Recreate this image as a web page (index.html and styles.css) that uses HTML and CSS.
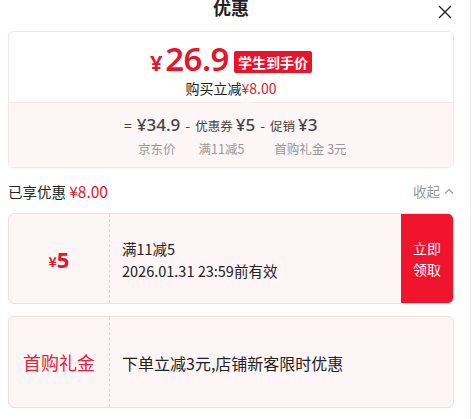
FILE: index.html
```html
<!DOCTYPE html>
<html lang="zh-CN">
<head>
    <meta charset="UTF-8">
    <title>优惠</title>
    <link rel="stylesheet" href="styles.css">
</head>
<body>
    <div class="panel">
        <div class="header">
            <span class="title">优惠</span>
            <span class="close">
                <svg width="14" height="14" viewBox="0 0 14 14"><path d="M1 1 L13 13 M13 1 L1 13" stroke="#222" stroke-width="1.4" fill="none"/></svg>
            </span>
        </div>

        <div class="summary">
            <div class="summary-top">
                <div class="price-row">
                    <span class="price"><span class="yen">¥</span>26.9</span>
                    <span class="tag">学生到手价</span>
                </div>
                <div class="save">购买立减<span class="red">¥8.00</span></div>
            </div>
            <div class="summary-bottom">
                <div class="formula">
                    <span class="op">=</span>
                    <span class="num">¥34.9</span>
                    <span class="op">-</span>
                    <span class="lbl">优惠券</span>
                    <span class="num">¥5</span>
                    <span class="op">-</span>
                    <span class="lbl">促销</span>
                    <span class="num">¥3</span>
                </div>
                <div class="notes">
                    <span class="n1">京东价</span>
                    <span class="n2">满11减5</span>
                    <span class="n3">首购礼金 3元</span>
                </div>
            </div>
        </div>

        <div class="enjoyed">
            <span>已享优惠 <span class="red">¥8.00</span></span>
            <span class="fold">收起
                <svg width="10" height="6" viewBox="0 0 10 6"><path d="M1 5.5 L5 1.5 L9 5.5" stroke="#999" stroke-width="1.1" fill="none"/></svg>
            </span>
        </div>

        <div class="coupon">
            <div class="coupon-left"><span class="small-yen">¥</span><span class="amount">5</span></div>
            <div class="coupon-mid">
                <div>满11减5</div>
                <div>2026.01.31 23:59前有效</div>
            </div>
            <div class="coupon-btn">立即<br>领取</div>
        </div>

        <div class="coupon tall">
            <div class="coupon-left gift">首购礼金</div>
            <div class="coupon-mid big">下单立减3元,店铺新客限时优惠</div>
        </div>
    </div>
</body>
</html>
```

FILE: styles.css
```css
body {
    margin: 0;
    font-family: "Noto Sans CJK SC", "Noto Sans", sans-serif;
    color: #222;
    background: #fff;
}
.panel {
    width: 446px;
    height: 419px;
    padding: 0 16px 0 8px;
    border-right: 1px solid #ececec;
    overflow: hidden;
}
.header {
    height: 38px;
    margin-top: -7px;
    display: flex;
    align-items: flex-start;
    justify-content: center;
    position: relative;
}
.title {
    font-size: 18px;
    font-weight: bold;
    line-height: 28px;
}
.close {
    position: absolute;
    right: 2px;
    top: 7px;
}
.summary {
    border: 1px solid #f5e4e6;
    border-radius: 6px;
    overflow: hidden;
    box-shadow: 0 1px 2px rgba(0,0,0,0.04);
}
.summary-top {
    height: 70px;
    display: flex;
    flex-direction: column;
    align-items: center;
    border-bottom: 1px solid #f8e6e8;
    position: relative;
}
.summary-top::after {
    content: "";
    position: absolute;
    left: 232px;
    bottom: -1px;
    border: 5px solid transparent;
    border-bottom-color: #fdf6f7;
}
.price-row {
    display: flex;
    align-items: center;
    margin-top: 11px;
    height: 34px;
}
.price {
    color: #e4162c;
    font-family: "Noto Sans", sans-serif;
    font-size: 33px;
    font-weight: 600;
    letter-spacing: -0.5px;
    line-height: 34px;
}
.price .yen {
    font-size: 22px;
    font-weight: bold;
    margin-right: 3px;
}
.tag {
    background: #e8142b;
    color: #fff;
    font-size: 14px;
    font-weight: bold;
    padding: 0 4px;
    height: 22px;
    line-height: 22px;
    border-radius: 2px;
    margin-left: 5px;
    margin-top: 3px;
}
.save {
    font-size: 14px;
    line-height: 20px;
    margin-top: 1px;
}
.red {
    color: #e4162c;
}
.summary-bottom {
    background: #fdf6f7;
    height: 64px;
    padding: 11px 0 0 115px;
    box-sizing: border-box;
    display: flex;
    flex-direction: column;
    align-items: flex-start;
}
.formula {
    display: flex;
    align-items: baseline;
    gap: 5px;
    color: #444;
    line-height: 22px;
}
.formula .num {
    font-family: "Noto Sans", sans-serif;
    font-size: 17px;
    font-weight: 500;
}
.formula .op {
    font-size: 14px;
}
.formula .lbl {
    font-size: 12.5px;
    margin-right: -2px;
}
.notes {
    font-size: 12.5px;
    color: #999;
    line-height: 18px;
    margin-top: 3px;
    display: flex;
    padding-left: 14px;
}
.notes .n2 { margin-left: 23px; }
.notes .n3 { margin-left: 30px; }
.enjoyed {
    display: flex;
    justify-content: space-between;
    align-items: center;
    margin-top: 12px;
    height: 22px;
    font-size: 14.5px;
}
.enjoyed .red {
    font-size: 15.5px;
}
.fold {
    color: #999;
    font-size: 13.5px;
    display: flex;
    align-items: center;
    gap: 4px;
}
.coupon {
    margin-top: 11px;
    height: 89px;
    background: #fdf5f6;
    border: 1px solid #f2dcdf;
    border-radius: 6px;
    display: flex;
    overflow: hidden;
}
.coupon.tall {
    margin-top: 12px;
    height: 90px;
}
.coupon-left {
    width: 100px;
    border-right: 1px dashed #ecccd1;
    display: flex;
    align-items: center;
    justify-content: center;
    color: #e4162c;
}
.small-yen {
    font-size: 14px;
    font-weight: bold;
    margin-top: 4px;
}
.amount {
    font-family: "Noto Sans", sans-serif;
    font-size: 22px;
    font-weight: bold;
}
.gift {
    font-size: 18px;
    color: #e0223a;
}
.coupon-mid {
    flex: 1;
    padding-left: 12px;
    display: flex;
    flex-direction: column;
    justify-content: center;
    font-size: 14.5px;
    line-height: 22px;
    padding-top: 2px;
}
.coupon-mid.big {
    font-size: 16px;
}
.coupon-btn {
    width: 52px;
    background: #f0142d;
    color: #fff;
    font-size: 14px;
    line-height: 21px;
    display: flex;
    align-items: center;
    justify-content: center;
    text-align: center;
}
```
